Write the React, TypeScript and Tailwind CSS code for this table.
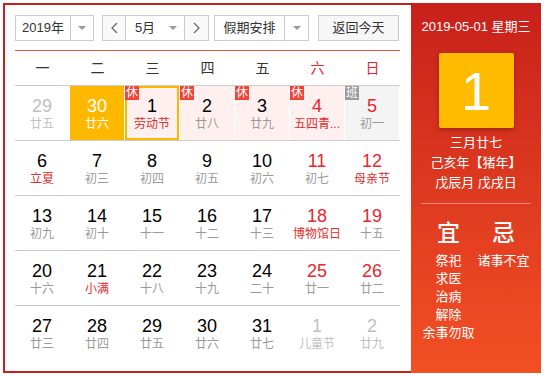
import React from "react";

type Day = {
  n: number;
  l: string;
  other?: boolean;
  red?: boolean;
  fest?: boolean;
  tag?: "休" | "班";
  hover?: boolean;
  today?: boolean;
};

const weeks: Day[][] = [
  [
    { n: 29, l: "廿五", other: true },
    { n: 30, l: "廿六", other: true, hover: true },
    { n: 1, l: "劳动节", fest: true, tag: "休", today: true },
    { n: 2, l: "廿八", tag: "休" },
    { n: 3, l: "廿九", tag: "休" },
    { n: 4, l: "五四青...", red: true, fest: true, tag: "休" },
    { n: 5, l: "初一", red: true, tag: "班" },
  ],
  [
    { n: 6, l: "立夏", fest: true },
    { n: 7, l: "初三" },
    { n: 8, l: "初四" },
    { n: 9, l: "初五" },
    { n: 10, l: "初六" },
    { n: 11, l: "初七", red: true },
    { n: 12, l: "母亲节", red: true, fest: true },
  ],
  [
    { n: 13, l: "初九" },
    { n: 14, l: "初十" },
    { n: 15, l: "十一" },
    { n: 16, l: "十二" },
    { n: 17, l: "十三" },
    { n: 18, l: "博物馆日", red: true, fest: true },
    { n: 19, l: "十五", red: true },
  ],
  [
    { n: 20, l: "十六" },
    { n: 21, l: "小满", fest: true },
    { n: 22, l: "十八" },
    { n: 23, l: "十九" },
    { n: 24, l: "二十" },
    { n: 25, l: "廿一", red: true },
    { n: 26, l: "廿二", red: true },
  ],
  [
    { n: 27, l: "廿三" },
    { n: 28, l: "廿四" },
    { n: 29, l: "廿五" },
    { n: 30, l: "廿六" },
    { n: 31, l: "廿七" },
    { n: 1, l: "儿童节", other: true },
    { n: 2, l: "廿九", other: true },
  ],
];

const heads = ["一", "二", "三", "四", "五", "六", "日"];

function Caret() {
  return <span className="w-0 h-0 border-x-[4px] border-t-[4px] border-x-transparent border-t-[#999]" />;
}

function Chevron({ left }: { left?: boolean }) {
  return (
    <svg width="7" height="12" viewBox="0 0 7 12" fill="none" stroke="#666" strokeWidth="1.2">
      <polyline points={left ? "6,1 1,6 6,11" : "1,1 6,6 1,11"} />
    </svg>
  );
}

function Cell({ d }: { d: Day }) {
  let bg = "bg-white";
  if (d.hover) bg = "bg-[#ffb800]";
  else if (d.tag === "休") bg = "bg-[#fff0ef]";
  else if (d.tag === "班") bg = "bg-[#f4f4f4]";

  let num = "text-black";
  let lun = "text-[#9a9a9a]";
  if (d.hover) {
    num = "text-white";
    lun = "text-white";
  } else if (d.other) {
    num = "text-[#c0c0c0]";
    lun = "text-[#c0c0c0]";
  } else {
    if (d.red) num = "text-[#e8262e]";
    if (d.fest) lun = "text-[#e02d2d]";
  }

  return (
    <div
      className={`relative w-[54px] h-[54px] flex flex-col items-center ${bg} ${
        d.today ? "border-2 border-[#ffb800] pt-[8px]" : "pt-[10px]"
      }`}
    >
      {d.tag && (
        <span
          className={`absolute ${d.today ? "-top-[2px] -left-[2px]" : "top-0 left-0"} w-[14px] h-[14px] flex items-center justify-center text-[12px] leading-none text-white ${
            d.tag === "休" ? "bg-[#f2433a]" : "bg-[#9b9b9b]"
          }`}
        >
          {d.tag}
        </span>
      )}
      <span className={`text-[18px] leading-[20px] ${num}`}>{d.n}</span>
      <span className={`text-[12px] leading-[16px] whitespace-nowrap ${lun}`}>{d.l}</span>
    </div>
  );
}

export default function App() {
  return (
    <div
      className="w-[544px] h-[376px] bg-white pl-[3px] pt-[3px]"
      style={{ fontFamily: '"Liberation Sans", "Noto Sans CJK SC", sans-serif' }}
    >
      <div className="flex h-[370px]">
        {/* calendar */}
        <div className="w-[408px] border-l-2 border-t-2 border-b-2 border-[#c81e1e] pl-[10px] pt-[10px]">
          <div className="flex items-center h-[26px] text-[13px] text-[#333]">
            <div className="flex w-[79px] h-[26px] border border-[#ccc] bg-white">
              <span className="w-[55px] flex items-center justify-center border-r border-[#ccc]">2019年</span>
              <span className="flex-1 flex items-center justify-center"><Caret /></span>
            </div>
            <div className="ml-[8px] flex w-[107px] h-[26px] border border-[#ccc]">
              <span className="w-[23px] flex items-center justify-center bg-[#f9f9f9] border-r border-[#ccc]"><Chevron left /></span>
              <span className="w-[59px] flex items-center border-r border-[#ccc] bg-white">
                <span className="flex-1 text-center pl-[2px]">5月</span>
                <span className="w-[22px] flex justify-center"><Caret /></span>
              </span>
              <span className="flex-1 flex items-center justify-center bg-[#f9f9f9]"><Chevron /></span>
            </div>
            <div className="ml-[5px] flex w-[95px] h-[26px] border border-[#ccc] bg-white">
              <span className="w-[70px] flex items-center justify-center border-r border-[#ccc]">假期安排</span>
              <span className="flex-1 flex items-center justify-center"><Caret /></span>
            </div>
            <div className="ml-[9px] w-[81px] h-[26px] border border-[#ccc] bg-[#f7f7f7] flex items-center justify-center">
              返回今天
            </div>
          </div>

          <div className="mt-[9px] w-[385px] h-px bg-[#e25549]" />

          <div className="grid grid-cols-[repeat(7,55px)] h-[34px] items-center text-[14px]">
            {heads.map((h, i) => (
              <span key={h} className={`text-center ${i >= 5 ? "text-[#e8262e]" : "text-[#333]"}`}>
                {h}
              </span>
            ))}
          </div>

          {weeks.map((w, i) => (
            <div key={i} className="w-[385px] border-t border-[#cccccc]">
              <div className="grid grid-cols-[repeat(7,55px)]">
                {w.map((d, j) => (
                  <Cell key={j} d={d} />
                ))}
              </div>
            </div>
          ))}
        </div>

        {/* side panel */}
        <div className="w-[130px] h-[370px] bg-gradient-to-b from-[#c81f1b] to-[#f34f24] flex flex-col items-center text-white">
          <div className="mt-[14px] text-[13px] leading-[20px]">2019-05-01 星期三</div>
          <div className="mt-[16px] w-[75px] h-[75px] rounded-[2px] bg-[#ffbb00] shadow-[0_2px_4px_rgba(0,0,0,0.25)] flex items-center justify-center text-[54px] leading-none">
            1
          </div>
          <div className="mt-[5px] text-[13px] leading-[20px] text-center">
            <div>三月廿七</div>
            <div>己亥年【猪年】</div>
            <div>戊辰月 戊戌日</div>
          </div>
          <div className="mt-[10px] w-[110px] h-px bg-white/40" />
          <div className="mt-[16px] w-[110px] grid grid-cols-2">
            <div className="flex flex-col items-center">
              <span className="text-[23px] leading-[26px] font-medium">宜</span>
              <div className="mt-[6px] flex flex-col items-center text-[13px] leading-[18px]">
                <span>祭祀</span>
                <span>求医</span>
                <span>治病</span>
                <span>解除</span>
                <span className="whitespace-nowrap">余事勿取</span>
              </div>
            </div>
            <div className="flex flex-col items-center">
              <span className="text-[23px] leading-[26px] font-medium">忌</span>
              <div className="mt-[6px] flex flex-col items-center text-[13px] leading-[18px]">
                <span className="whitespace-nowrap">诸事不宜</span>
              </div>
            </div>
          </div>
        </div>
      </div>
    </div>
  );
}
